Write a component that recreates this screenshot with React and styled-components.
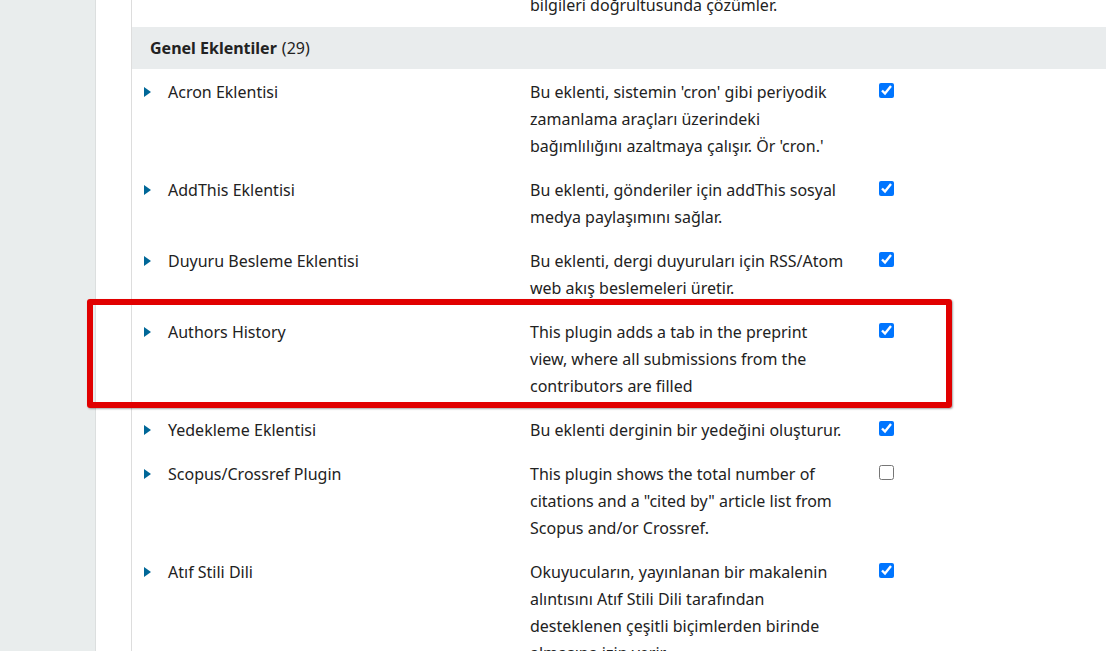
import styled, { createGlobalStyle } from 'styled-components';

const GlobalStyle = createGlobalStyle`
    html, body {
        margin: 0;
        padding: 0;
        height: 100%;
        overflow: hidden;
        background: #fff;
    }
    body {
        font-family: "Noto Sans", "Liberation Sans", sans-serif;
        color: #222;
    }
`;

const Page = styled.div`
    display: flex;
    height: 651px;
    overflow: hidden;
`;

const Sidebar = styled.aside`
    width: 95px;
    flex-shrink: 0;
    background: #e9eded;
    border-right: 1px solid #dcdfdf;
`;

const Main = styled.main`
    flex: 1;
    padding-left: 35px;
`;

const Table = styled.div`
    border-left: 1px solid #dddddd;
    min-height: calc(100% + 8px);
    margin-top: -8px;
`;

const Row = styled.div`
    position: relative;
    display: flex;
    align-items: flex-start;
    padding: ${({ $partial }) => ($partial ? '0 0 8px 12px' : '10px 0 7px 12px')};
    font-size: 16px;
    line-height: 27px;
`;

const Arrow = styled.span`
    width: 24px;
    flex-shrink: 0;
    display: flex;
    align-items: center;
    height: 27px;
    visibility: ${({ $hidden }) => ($hidden ? 'hidden' : 'visible')};

    &::before {
        content: '';
        display: block;
        width: 0;
        height: 0;
        border-top: 5px solid transparent;
        border-bottom: 5px solid transparent;
        border-left: 7px solid #006798;
        margin-top: -1px;
    }
`;

const Name = styled.div`
    width: 362px;
    flex-shrink: 0;
`;

const Description = styled.div`
    width: 315px;
    flex-shrink: 0;
    margin-right: 34px;
`;

const Check = styled.input.attrs({ type: 'checkbox', readOnly: true })`
    width: 15px;
    height: 15px;
    margin: 4px 0 0 0;
    accent-color: #0075ff;
`;

const GroupHeader = styled.div`
    background: #e9eced;
    padding: 0 18px;
    height: 42px;
    display: flex;
    align-items: center;
    font-size: 16px;
`;

const GroupTitle = styled.strong`
    font-weight: 700;
    margin-right: 5px;
`;

const Highlight = styled.div`
    position: absolute;
    left: -45px;
    top: -10px;
    width: 865px;
    bottom: -1px;
    border: 6px solid #e10000;
    border-radius: 3px;
    box-sizing: border-box;
    box-shadow: 1px 1px 2px rgba(0, 0, 0, 0.35);
    pointer-events: none;
`;

const plugins = [
    {
        name: 'Acron Eklentisi',
        desc: "Bu eklenti, sistemin 'cron' gibi periyodik zamanlama araçları üzerindeki bağımlılığını azaltmaya çalışır. Ör 'cron.'",
        on: true,
    },
    {
        name: 'AddThis Eklentisi',
        desc: 'Bu eklenti, gönderiler için addThis sosyal medya paylaşımını sağlar.',
        on: true,
    },
    {
        name: 'Duyuru Besleme Eklentisi',
        desc: 'Bu eklenti, dergi duyuruları için RSS/Atom web akış beslemeleri üretir.',
        on: true,
    },
    {
        name: 'Authors History',
        desc: 'This plugin adds a tab in the preprint view, where all submissions from the contributors are filled',
        on: true,
        marked: true,
    },
    {
        name: 'Yedekleme Eklentisi',
        desc: 'Bu eklenti derginin bir yedeğini oluşturur.',
        on: true,
    },
    {
        name: 'Scopus/Crossref Plugin',
        desc: 'This plugin shows the total number of citations and a "cited by" article list from Scopus and/or Crossref.',
        on: false,
    },
    {
        name: 'Atıf Stili Dili',
        desc: 'Okuyucuların, yayınlanan bir makalenin alıntısını Atıf Stili Dili tarafından desteklenen çeşitli biçimlerden birinde almasına izin verir.',
        on: true,
    },
];

const App = () => {
    return (
        <>
            <GlobalStyle />
            <Page>
                <Sidebar />
                <Main>
                    <Table>
                        <Row $partial>
                            <Arrow $hidden />
                            <Name />
                            <Description>bilgileri doğrultusunda çözümler.</Description>
                        </Row>
                        <GroupHeader>
                            <GroupTitle>Genel Eklentiler</GroupTitle> (29)
                        </GroupHeader>
                        {plugins.map((p) => (
                            <Row key={p.name}>
                                <Arrow />
                                <Name>{p.name}</Name>
                                <Description>{p.desc}</Description>
                                <Check checked={p.on} />
                                {p.marked && <Highlight />}
                            </Row>
                        ))}
                    </Table>
                </Main>
            </Page>
        </>
    );
};

export default App;
